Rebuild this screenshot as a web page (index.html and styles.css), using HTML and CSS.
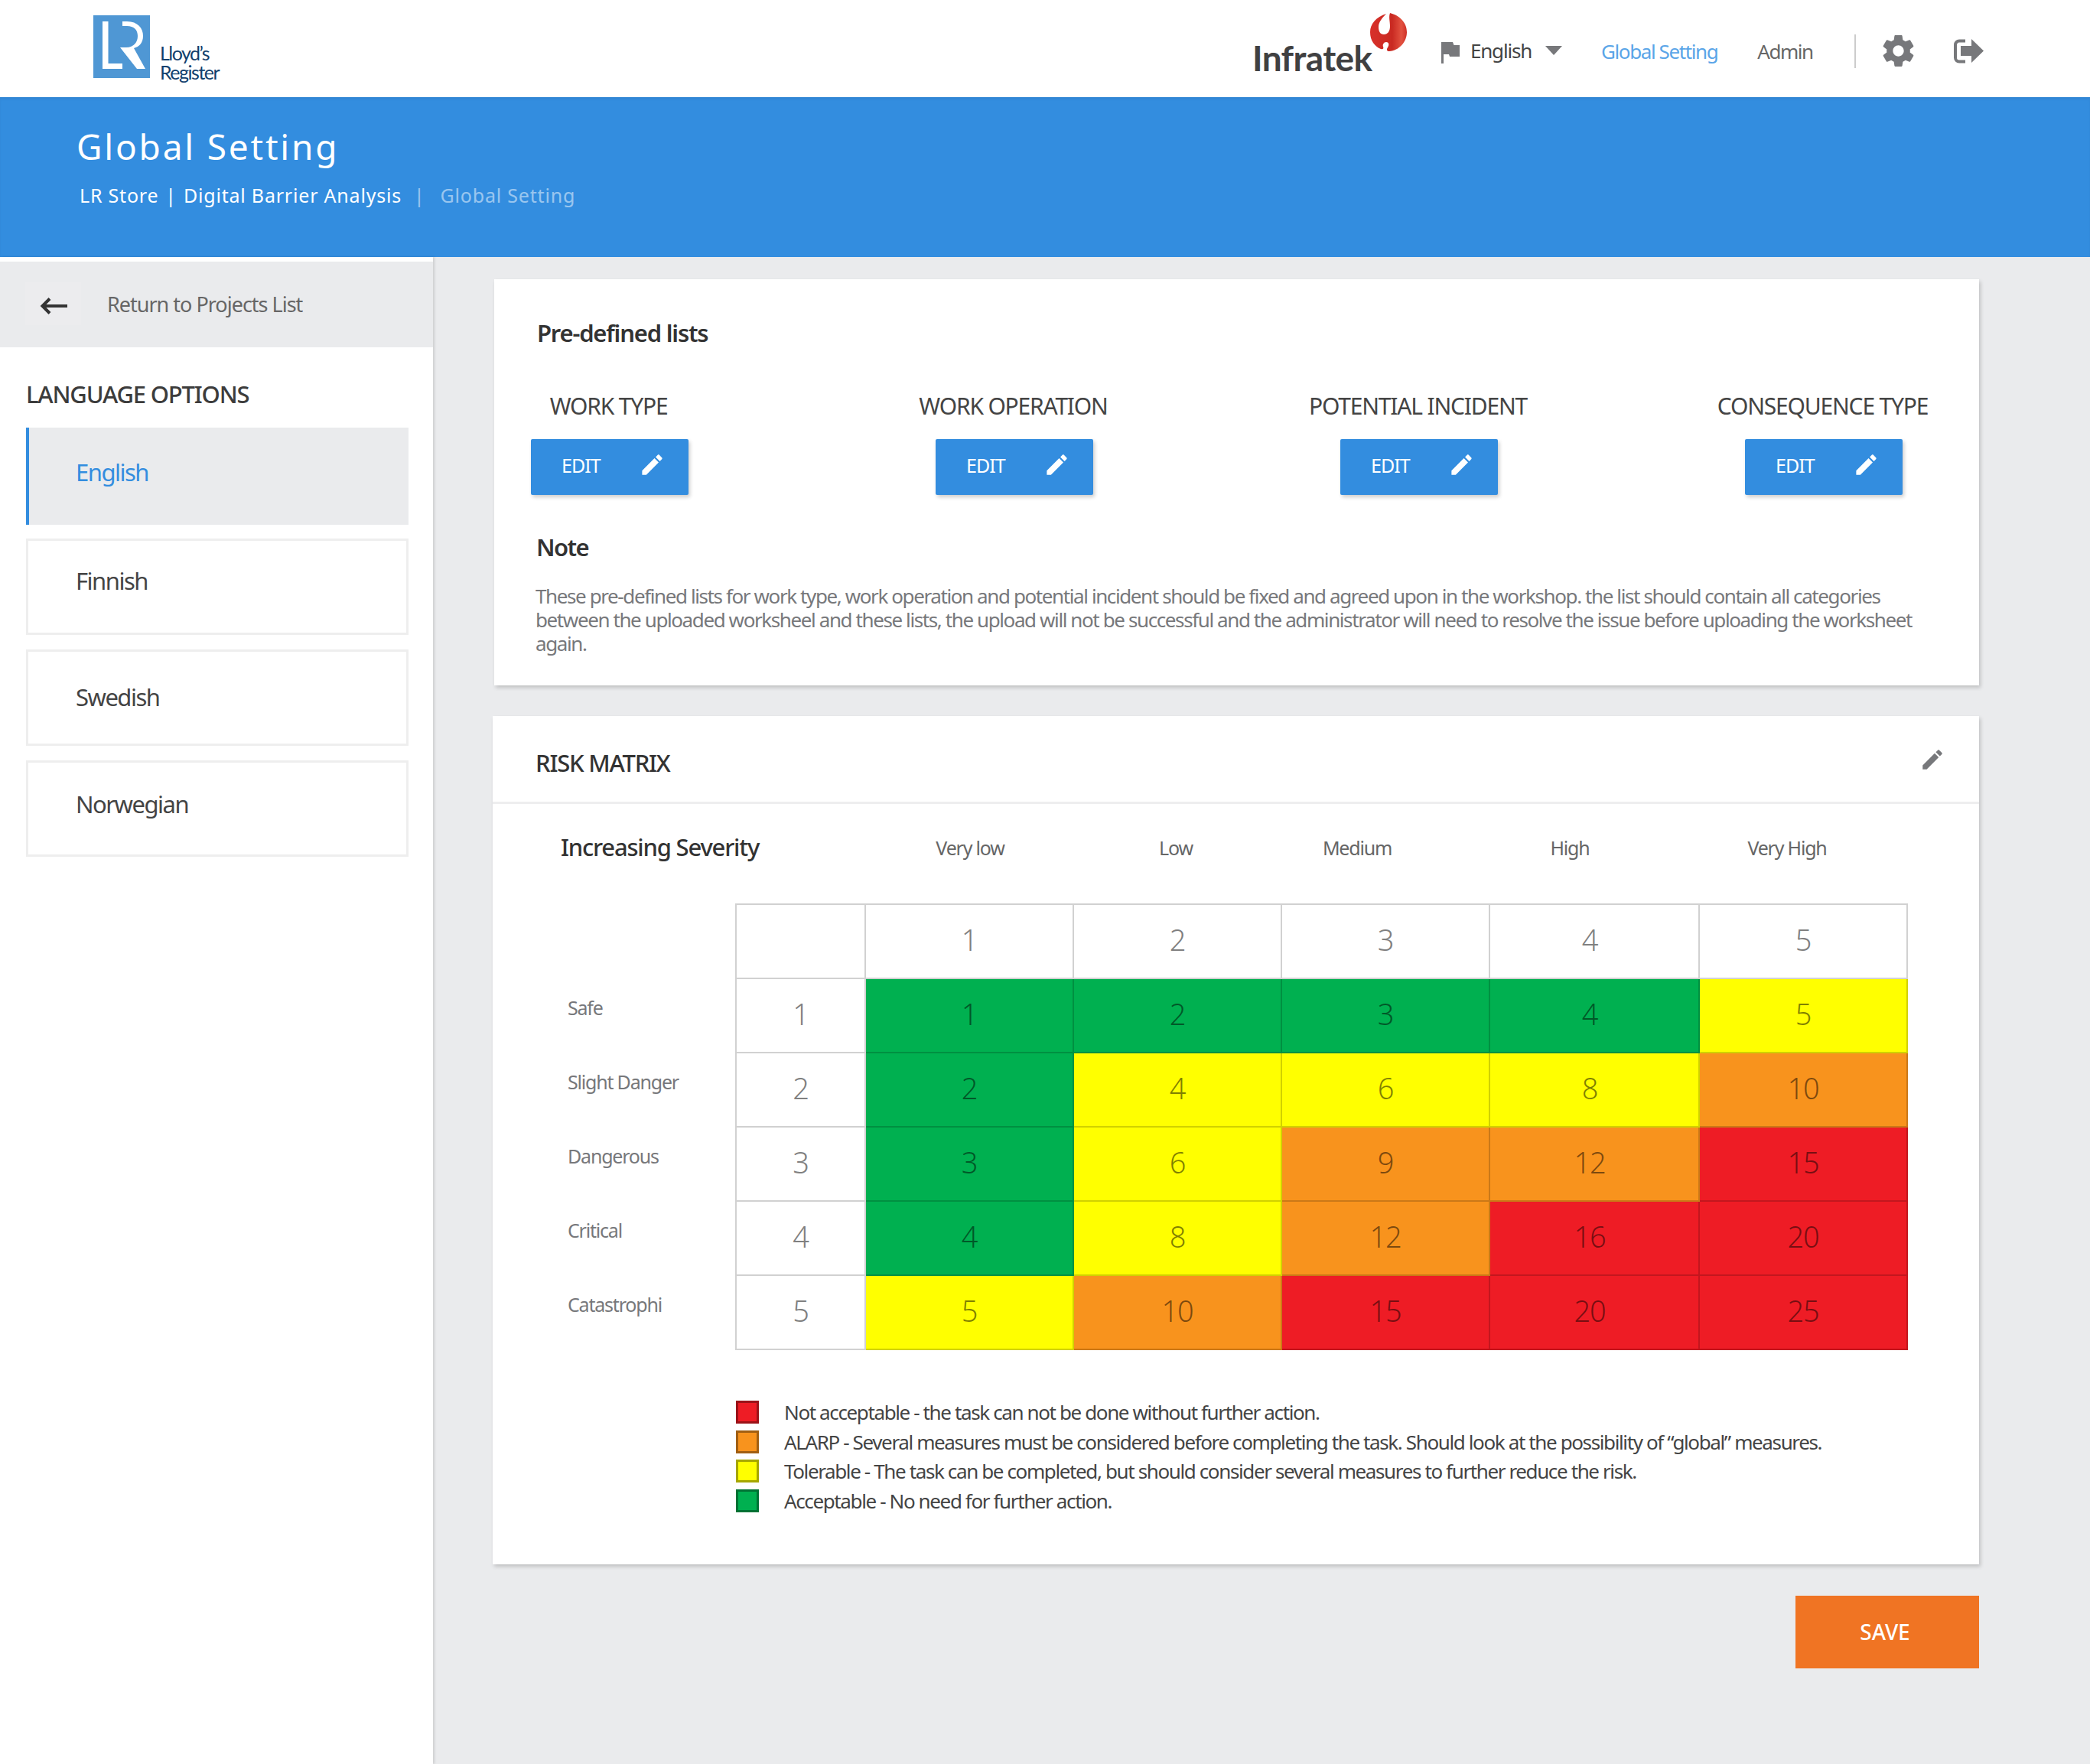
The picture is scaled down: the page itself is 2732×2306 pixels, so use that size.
FILE: index.html
```html
<!DOCTYPE html>
<html lang="en">

<head>
    <meta charset="UTF-8">
    <title>Global Setting</title>
    <link rel="stylesheet" href="styles.css">
</head>

<body>
    <header class="topbar">
        <div class="lr-logo">
            <svg class="lr-mark" viewBox="0 0 74 82">
                <rect width="74" height="82" fill="#4f97d4"></rect>
                <path d="M12 8h7.500v55H38v7H12z" fill="#fff"></path>
                <path d="M38 8h6c14 0 21 9 21 19 0 9-5 14-12 16l15 27H57L35 42h8c10 0 15-7 15-15 0-8-5-13-14-13h-6z" fill="#fff"></path>
            </svg>
            <div class="lr-name">Lloyd’s<br>Register</div>
        </div>
        <div class="infratek">
            <span class="infratek-name">Infratek</span>
            <svg class="infratek-mark" viewBox="0 0 48 50">
                <defs>
                    <linearGradient id="infratekRed" x1="0" x2="1" y1="0" y2="0">
                        <stop offset="0" stop-color="#d8302a"></stop>
                        <stop offset="0.6" stop-color="#c92a22"></stop>
                        <stop offset="0.85" stop-color="#e2513f"></stop>
                        <stop offset="1" stop-color="#cf3027"></stop>
                    </linearGradient>
                </defs>
                <path d="M21 1C8 5 0 14 0 25c0 11 6 19 14 22 3 1 4-1 3-3-1-3 1-6 4-6 4 0 4 4 2 7-2 3-1 5 2 5 13-1 23-12 23-25C48 12 38 3 26 0c-2 5 0 11 0 17 0 7-3 11-8 11s-7-4-7-10c0-6 5-12 10-17z" fill="url(#infratekRed)"></path>
            </svg>
        </div>
        <nav class="topnav">
            <div class="lang-pick">
                <svg class="flag" viewBox="0 0 24 28"><path d="M0 0h15l1.500 4H24v15H11l-1-3H3v12H0z" fill="#77787b"></path></svg>
                <span>English</span>
                <i class="caret"></i>
            </div>
            <a class="nav-link active" href="#">Global Setting</a>
            <a class="nav-link" href="#">Admin</a>
            <span class="nav-sep"></span>
            <svg class="gear" viewBox="0 0 24 24"><path d="M19.430 12.980c.04-.32.07-.64.07-.98s-.03-.66-.07-.98l2.110-1.650c.19-.15.24-.42.12-.64l-2-3.460c-.12-.22-.39-.3-.61-.22l-2.490 1c-.52-.4-1.080-.73-1.690-.98l-.38-2.650C14.460 2.180 14.250 2 14 2h-4c-.25 0-.46.18-.49.42l-.38 2.650c-.61.25-1.170.59-1.690.98l-2.490-1c-.23-.09-.49 0-.61.22l-2 3.460c-.13.22-.07.49.12.64l2.110 1.650c-.04.32-.07.65-.07.98s.03.66.07.98l-2.110 1.650c-.19.15-.24.42-.12.64l2 3.460c.12.22.39.3.61.22l2.490-1c.52.4 1.080.73 1.690.98l.38 2.650c.03.24.24.42.49.42h4c.25 0 .46-.18.49-.42l.38-2.650c.61-.25 1.170-.59 1.690-.98l2.490 1c.23.09.49 0 .61-.22l2-3.460c.12-.22.07-.49-.12-.64l-2.110-1.650zM12 15.500c-1.930 0-3.500-1.570-3.500-3.500s1.570-3.500 3.500-3.500 3.500 1.570 3.500 3.500-1.570 3.500-3.500 3.500z" fill="#77787b"></path></svg>
            <svg class="logout" viewBox="0 0 40 32"><path d="M15 2.500H7a5 5 0 0 0-5 5v17a5 5 0 0 0 5 5h8" fill="none" stroke="#77787b" stroke-width="4"></path><path d="M9 9h14V0l16 15.500L23 31v-9H9z" fill="#77787b"></path></svg>
        </nav>
    </header>

    <section class="banner">
        <h1>Global Setting</h1>
        <div class="crumbs">
            <span>LR Store</span><span class="crumb-sep">|</span><span>Digital Barrier Analysis</span><span class="crumb-sep dim">|</span><span class="dim">Global Setting</span>
        </div>
    </section>

    <div class="page">
        <aside class="sidebar">
            <div class="back-row">
                <span class="back-btn">
                    <svg viewBox="0 0 36 22"><path d="M36 11H4M13 1.500L3.500 11l9.500 9.500" fill="none" stroke="#333" stroke-width="4"></path></svg>
                </span>
                <span>Return to Projects List</span>
            </div>
            <h3 class="lang-title">LANGUAGE OPTIONS</h3>
            <ul class="lang-list">
                <li class="selected">English</li>
                <li>Finnish</li>
                <li>Swedish</li>
                <li>Norwegian</li>
            </ul>
        </aside>

        <main class="content">
            <section class="card lists-card">
                <h2>Pre-defined lists</h2>
                <div class="list-cols">
                    <div class="list-col">
                        <div class="list-name">WORK TYPE</div>
                        <button type="button" class="edit-btn">EDIT
                            <svg viewBox="0 0 24 24"><path d="M3 17.250V21h3.750L17.810 9.940l-3.750-3.750L3 17.250zM20.710 7.040c.39-.39.39-1.020 0-1.410l-2.340-2.340c-.39-.39-1.020-.39-1.410 0l-1.830 1.830 3.750 3.750 1.830-1.830z" fill="#fff"></path></svg>
                        </button>
                    </div>
                    <div class="list-col">
                        <div class="list-name">WORK OPERATION</div>
                        <button type="button" class="edit-btn">EDIT
                            <svg viewBox="0 0 24 24"><path d="M3 17.250V21h3.750L17.810 9.940l-3.750-3.750L3 17.250zM20.710 7.040c.39-.39.39-1.020 0-1.410l-2.340-2.340c-.39-.39-1.020-.39-1.410 0l-1.830 1.830 3.750 3.750 1.830-1.830z" fill="#fff"></path></svg>
                        </button>
                    </div>
                    <div class="list-col">
                        <div class="list-name">POTENTIAL INCIDENT</div>
                        <button type="button" class="edit-btn">EDIT
                            <svg viewBox="0 0 24 24"><path d="M3 17.250V21h3.750L17.810 9.940l-3.750-3.750L3 17.250zM20.710 7.040c.39-.39.39-1.020 0-1.410l-2.340-2.340c-.39-.39-1.020-.39-1.410 0l-1.830 1.830 3.750 3.750 1.830-1.830z" fill="#fff"></path></svg>
                        </button>
                    </div>
                    <div class="list-col">
                        <div class="list-name">CONSEQUENCE TYPE</div>
                        <button type="button" class="edit-btn">EDIT
                            <svg viewBox="0 0 24 24"><path d="M3 17.250V21h3.750L17.810 9.940l-3.750-3.750L3 17.250zM20.710 7.040c.39-.39.39-1.020 0-1.410l-2.340-2.340c-.39-.39-1.020-.39-1.410 0l-1.830 1.830 3.750 3.750 1.830-1.830z" fill="#fff"></path></svg>
                        </button>
                    </div>
                </div>
                <h4>Note</h4>
                <p class="note">These pre-defined lists for work type, work operation and potential incident should be fixed and agreed upon in the workshop. the list should contain all categories<br>between the uploaded worksheel and these lists, the upload will not be successful and the administrator will need to resolve the issue before uploading the worksheet<br>again.</p>
            </section>

            <section class="card risk-card">
                <div class="risk-head">
                    <h2>RISK MATRIX</h2>
                    <svg viewBox="0 0 24 24"><path d="M3 17.250V21h3.750L17.810 9.940l-3.750-3.750L3 17.250zM20.710 7.040c.39-.39.39-1.020 0-1.410l-2.340-2.340c-.39-.39-1.020-.39-1.410 0l-1.830 1.830 3.750 3.750 1.830-1.830z" fill="#77787b"></path></svg>
                </div>
                <div class="severity">
                    <strong>Increasing Severity</strong>
                    <span>Very low</span>
                    <span>Low</span>
                    <span>Medium</span>
                    <span>High</span>
                    <span>Very High</span>
                </div>
                <table class="matrix">
                    <tr><th></th><td class="blank"></td><td>1</td><td>2</td><td>3</td><td>4</td><td>5</td></tr>
                    <tr><th><span>Safe</span></th><td>1</td><td class="g">1</td><td class="g">2</td><td class="g">3</td><td class="g">4</td><td class="y">5</td></tr>
                    <tr><th><span>Slight Danger</span></th><td>2</td><td class="g">2</td><td class="y">4</td><td class="y">6</td><td class="y">8</td><td class="o">10</td></tr>
                    <tr><th><span>Dangerous</span></th><td>3</td><td class="g">3</td><td class="y">6</td><td class="o">9</td><td class="o">12</td><td class="r">15</td></tr>
                    <tr><th><span>Critical</span></th><td>4</td><td class="g">4</td><td class="y">8</td><td class="o">12</td><td class="r">16</td><td class="r">20</td></tr>
                    <tr><th><span>Catastrophi</span></th><td>5</td><td class="y">5</td><td class="o">10</td><td class="r">15</td><td class="r">20</td><td class="r">25</td></tr>
                </table>
                <ul class="legend">
                    <li><i class="r"></i>Not acceptable - the task can not be done without further action.</li>
                    <li><i class="o"></i>ALARP - Several measures must be considered before completing the task. Should look at the possibility of “global” measures.</li>
                    <li><i class="y"></i>Tolerable - The task can be completed, but should consider several measures to further reduce the risk.</li>
                    <li><i class="g"></i>Acceptable - No need for further action.</li>
                </ul>
            </section>

            <div class="save-row">
                <button type="button" class="save-btn">SAVE</button>
            </div>
        </main>
    </div>
</body>

</html>
```
FILE: styles.css
```css
* {
    box-sizing: border-box;
}

html,
body {
    margin: 0;
    height: 100%;
}

body {
    width: 2732px;
    min-height: 2306px;
    background-color: #eaebed;
    font-family: "Noto Sans", "Liberation Sans", sans-serif;
    letter-spacing: -1.2px;
    color: #444;
}

/* top bar */
.topbar {
    display: flex;
    align-items: flex-start;
    height: 127px;
    background-color: #fff;
    padding-left: 122px;
}

.lr-logo {
    display: flex;
    align-items: flex-end;
    margin-top: 20px;
    width: 1515px;
}

.lr-mark {
    width: 74px;
    height: 82px;
}

.lr-name {
    margin-left: 13px;
    margin-bottom: -5px;
    font-family: "Lato", sans-serif;
    font-size: 25px;
    line-height: 25px;
    letter-spacing: -1.500px;
    color: #123f6d;
}

.infratek {
    display: flex;
    width: 247px;
    padding-top: 17px;
}

.infratek-name {
    width: 154px;
    flex-shrink: 0;
    margin-top: 34px;
    font-family: "Lato", sans-serif;
    font-size: 46px;
    line-height: 50px;
    font-weight: 700;
    letter-spacing: -0.600px;
    color: #404041;
}

.infratek-mark {
    width: 48px;
    height: 50px;
    flex-shrink: 0;
}

.topnav {
    display: flex;
    align-items: center;
    height: 133px;
    font-size: 26px;
}

.lang-pick {
    display: flex;
    align-items: center;
    width: 209px;
    margin-top: -2px;
    color: #444;
}

.flag {
    width: 24px;
    height: 28px;
    margin-right: 14px;
    margin-top: 6px;
}

.caret {
    width: 0;
    height: 0;
    margin-left: 18px;
    border-left: 11px solid transparent;
    border-right: 11px solid transparent;
    border-top: 12px solid #77787b;
}

.nav-link {
    color: #666;
    text-decoration: none;
    margin-right: 54px;
    letter-spacing: -1.500px;
}

.nav-link.active {
    margin-right: 52px;
    letter-spacing: -1.400px;
    color: #5aa5e8;
}

.nav-sep {
    width: 2px;
    height: 44px;
    background-color: #ccc;
    margin-right: 31px;
}

.gear {
    width: 49px;
    height: 49px;
    margin-right: 48px;
}

.logout {
    width: 40px;
    height: 32px;
}

/* blue banner */
.banner {
    height: 209px;
    background-color: #338ddf;
    box-shadow: inset 0 3px 3px rgba(0, 0, 0, 0.05);
    padding: 32px 0 0 100px;
    color: #fff;
}

.banner h1 {
    margin: 0;
    font-size: 46px;
    line-height: 64px;
    font-weight: 400;
    letter-spacing: 2.800px;
}

.crumbs {
    display: flex;
    margin: 15px 0 0 4px;
    font-size: 25px;
    line-height: 34px;
    letter-spacing: 0.800px;
}

.crumb-sep {
    margin: 0 9px;
}

.crumb-sep.dim {
    margin: 0 20px 0 16px;
}

.dim {
    opacity: 0.5;
}

.page {
    display: flex;
    align-items: stretch;
    min-height: 1970px;
}

/* left column */
.sidebar {
    width: 566px;
    background-color: #fff;
    padding-top: 6px;
    box-shadow: 2px 0 3px rgba(0, 0, 0, 0.12);
    flex-shrink: 0;
}

.back-row {
    display: flex;
    align-items: center;
    height: 112px;
    background-color: #eaebed;
    padding: 0 0 2px 33px;
    font-size: 27px;
    letter-spacing: -1px;
    color: #666;
}

.back-btn {
    display: flex;
    align-items: center;
    justify-content: center;
    width: 73px;
    height: 56px;
    margin-right: 34px;
    background-color: #ececee;
}

.back-btn svg {
    width: 36px;
    height: 22px;
    margin-top: 6px;
}

.lang-title {
    margin: 42px 0 25px 34px;
    font-size: 31px;
    line-height: 38px;
    font-weight: 500;
    color: #3c3c3c;
}

.lang-list {
    list-style: none;
    margin: 0 0 0 34px;
    padding: 0;
    width: 500px;
}

.lang-list li {
    height: 126px;
    margin-bottom: 19px;
    padding: 36px 0 0 62px;
    border: 3px solid #eee;
    font-size: 31px;
    line-height: 42px;
    letter-spacing: -1.500px;
    color: #444;
}

.lang-list li.selected {
    height: 127px;
    padding: 37px 0 0 61px;
    margin-bottom: 18px;
    background-color: #eaebed;
    border: 0;
    border-left: 4px solid #338ddf;
    color: #338ddf;
}

.lang-list li:nth-child(2) {
    padding-top: 31px;
}

.lang-list li:nth-child(3) {
    padding-top: 38px;
}

.lang-list li:nth-child(4) {
    padding-top: 33px;
}

/* right column */
.content {
    width: 2021px;
    padding: 29px 0 0 80px;
}

.card {
    width: 1941px;
    background-color: #fff;
    box-shadow: 2px 3px 5px rgba(0, 0, 0, 0.18);
}

.lists-card {
    height: 531px;
    padding: 49px 0 0 56px;
}

.lists-card h2 {
    margin: 0;
    font-size: 31px;
    line-height: 42px;
    font-weight: 600;
    letter-spacing: -1.200px;
    color: #333;
}

.list-cols {
    display: grid;
    grid-template-columns: repeat(4, 206px);
    column-gap: 323px;
    margin: 54px 0 0 -8px;
}

.list-col {
    display: flex;
    flex-direction: column;
    align-items: center;
}

.list-name {
    padding-right: 3px;
    font-size: 30px;
    line-height: 42px;
    white-space: nowrap;
}

.edit-btn {
    display: flex;
    align-items: center;
    justify-content: space-between;
    width: 206px;
    height: 73px;
    margin-top: 22px;
    padding: 0 30px 6px 40px;
    border: 0;
    border-radius: 2px;
    background-color: #338ddf;
    box-shadow: 2px 3px 5px rgba(0, 0, 0, 0.2);
    color: #fff;
    font-family: inherit;
    font-size: 25px;
    letter-spacing: -1px;
}

.edit-btn svg {
    width: 35px;
    height: 35px;
}

.lists-card h4 {
    margin: 47px 0 0 -1px;
    font-size: 31px;
    line-height: 42px;
    font-weight: 600;
    letter-spacing: -1.600px;
    color: #333;
}

.note {
    margin: 28px 0 0 -2px;
    font-size: 26px;
    line-height: 30.800px;
    letter-spacing: -1.400px;
    color: #77787b;
}

.risk-card {
    height: 1109px;
    margin-top: 40px;
    margin-left: -2px;
    width: 1943px;
}

.risk-head {
    display: flex;
    align-items: center;
    justify-content: space-between;
    height: 115px;
    padding: 9px 44px 0 56px;
    border-bottom: 3px solid #eeeeef;
}

.risk-head h2 {
    margin: 0;
    font-size: 31px;
    font-weight: 500;
    color: #333;
}

.risk-head svg {
    width: 34px;
    height: 34px;
    margin-bottom: 7px;
}

.severity {
    display: grid;
    grid-template-columns: 399px 272px 266px 208px 348px 220px;
    align-items: center;
    height: 114px;
    padding-left: 89px;
    font-size: 25px;
    color: #666;
    text-align: center;
}

.severity strong {
    margin-bottom: 3px;
    text-align: left;
    font-size: 31px;
    font-weight: 500;
    color: #333;
}

.matrix {
    border-collapse: separate;
    border-spacing: 0;
    table-layout: fixed;
    margin-top: 16px;
    margin-left: 98px;
    width: 1752px;
    font-size: 38px;
    font-weight: 300;
    color: #808080;
    text-align: center;
}

.matrix th {
    width: 219px;
    padding: 0;
    font-size: 25px;
    font-weight: 400;
    color: #77787b;
    text-align: left;
    vertical-align: top;
}

.matrix th span {
    display: block;
    margin-top: 20px;
}

.matrix td {
    width: 272px;
    height: 97px;
    padding: 0 0 5px;
    border-right: 2px solid rgba(0, 0, 0, 0.18);
    border-bottom: 2px solid rgba(0, 0, 0, 0.18);
}

.matrix tr:first-child td {
    border-top: 2px solid rgba(0, 0, 0, 0.18);
    height: 99px;
}

.matrix th + td {
    width: 171px;
    border-left: 2px solid rgba(0, 0, 0, 0.18);
}

.matrix td:nth-child(6) {
    width: 274px;
    padding-right: 12px;
}

.matrix td.g,
.matrix td.y,
.matrix td.o,
.matrix td.r {
    color: rgba(0, 0, 0, 0.5);
}

.g {
    background-color: #00b050;
}

.y {
    background-color: #ffff00;
}

.o {
    background-color: #f8931d;
}

.r {
    background-color: #ee1c25;
}

.legend {
    list-style: none;
    margin: 62px 0 0 318px;
    padding: 0;
    font-size: 26px;
    letter-spacing: -1.380px;
    color: #444;
}

.legend li {
    display: flex;
    align-items: center;
    height: 38.500px;
}

.legend i {
    width: 30px;
    height: 30px;
    margin-right: 33px;
    border: 3px solid rgba(0, 0, 0, 0.35);
}

.save-row {
    display: flex;
    justify-content: flex-end;
    width: 1941px;
    margin-top: 41px;
}

.save-btn {
    width: 240px;
    height: 95px;
    border: 0;
    padding: 0 6px 2px 0;
    background-color: #f07423;
    color: #fff;
    font-family: inherit;
    font-size: 28px;
    font-weight: 500;
}
```
